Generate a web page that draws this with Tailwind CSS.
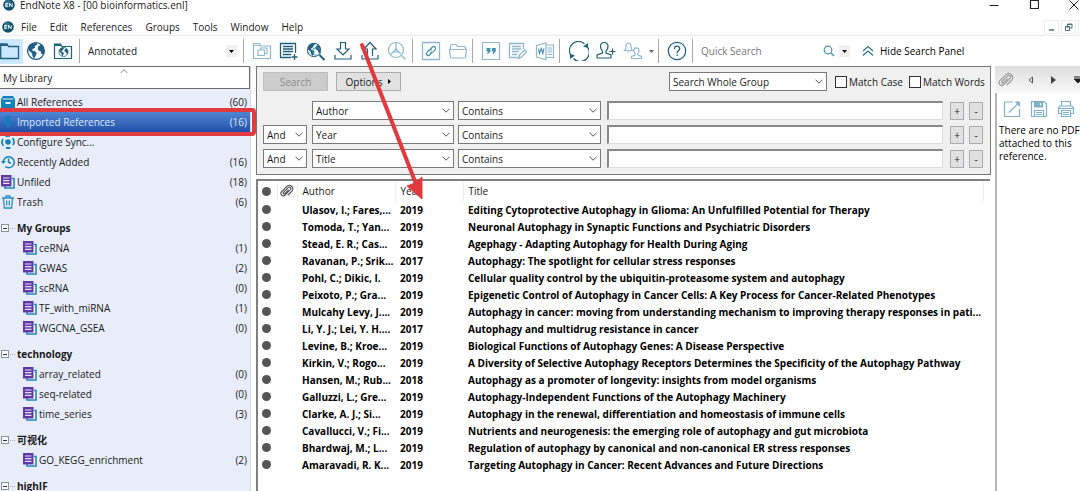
<!DOCTYPE html>
<html lang="en">
<head>
    <meta charset="UTF-8">
    <meta name="viewport" content="width=device-width, initial-scale=1.0">
    <title>EndNote X8 - [00 bioinformatics.enl]</title>
    <script src="https://cdn.jsdelivr.net/npm/@tailwindcss/browser@4"></script>
</head>
<body class="relative flex h-screen flex-col overflow-hidden bg-white font-['Open_Sans','Noto_Sans_CJK_SC',sans-serif] text-[10px] leading-[14px] text-[#1a1a1a]">

    <!-- Shared icons -->
    <svg class="hidden">
        <symbol id="logo" viewBox="0 0 12 12">
            <circle cx="6" cy="6" r="5.8" fill="#12506b"/>
            <circle cx="5" cy="4" r="3" fill="#3d86a3" opacity=".6"/>
            <path d="M2.6 4.4h2.6M2.6 6h2.2M2.6 7.7h2.6M2.8 4.4v3.3M6.6 7.8V4.3l2.6 3.4V4.2" fill="none" stroke="#fff" stroke-width=".9"/>
        </symbol>
        <symbol id="chevron" viewBox="0 0 8 5">
            <path d="M.5.7 4 4.2 7.5.7" fill="none" stroke="#555"/>
        </symbol>
        <symbol id="clip" viewBox="0 0 16 16">
            <path d="M4 9.5l5.6-5.6a1.7 1.7 0 012.4 2.4L5.8 12.6a2.7 2.7 0 01-3.9-3.9L8.4 2.2a4 4 0 015.5 5.6L8.8 13M4 9.5a1 1 0 001.5 1.4l4.3-4.3" fill="none" stroke="currentColor" stroke-width="1.2"/>
        </symbol>
        <symbol id="group" viewBox="0 0 14 14">
            <path d="M11 3.500h2v9.500H4v-2" fill="#fff" stroke="#1e86c0" stroke-width="1.600"/>
            <path d="M0 0h10.5v11.5H0z" fill="#5f3aa5"/>
            <path d="M2 3h6.5M2 5.7h6.5M2 8.4h6.5" stroke="#e6defa" stroke-width="1.2"/>
        </symbol>
        <symbol id="globe" viewBox="0 0 20 20">
            <circle cx="10" cy="10" r="8.4" fill="#f4fafd" stroke="#1f5f80" stroke-width="1.3"/>
            <path d="M3 5.5C5 2.5 8 1.8 10.5 2l.6 1.7-2.4 1.2.4 1.8-2.5 1.2-.3 1.9 2.8.4 1.7 2-1.2 2.5-1.3 2.8-1.8-2.2-.4-3L3.3 10 2 8zM12.5 5.2l2.8-1.7 2.4 3 .8 4.3-1.5 2.8-1.8-.8-.5-2.6-2.4-.7-.6-2.3z" fill="#1f5f80"/>
        </symbol>
    </svg>

    <!-- Title bar -->
    <header class="mb-2 flex h-[10px] shrink-0 items-center pl-[3px] leading-[10px]">
        <svg class="mr-[5px] size-3"><use href="#logo"/></svg>
        <h1>EndNote X8 - [00 bioinformatics.enl]</h1>
        <div class="ml-auto flex items-center gap-[30px] pr-px">
            <button aria-label="Minimize"><svg class="block h-[10px] w-[10px]" viewBox="0 0 10 10"><path d="M.5 5.5h9" stroke="#222"/></svg></button>
            <button aria-label="Maximize"><svg class="block h-[10px] w-[10px]" viewBox="0 0 10 10"><path d="M1.5.5h8v8h-8z" fill="none" stroke="#222" stroke-width="1.2"/></svg></button>
            <button aria-label="Close"><svg class="block h-[10px] w-[10px]" viewBox="0 0 10 10"><path d="M.5.5l9 9M9.5.5l-9 9" stroke="#222"/></svg></button>
        </div>
    </header>

    <!-- Menu bar -->
    <nav class="flex h-[18px] shrink-0 items-center border-b border-[#ebebeb] pl-0.5">
        <svg class="mr-[7px] size-3"><use href="#logo"/></svg>
        <div class="flex items-center gap-[13px]">
            <button>File</button>
            <button>Edit</button>
            <button>References</button>
            <button>Groups</button>
            <button>Tools</button>
            <button>Window</button>
            <button>Help</button>
        </div>
        <div class="ml-auto flex gap-0.5">
            <button aria-label="Minimize document" class="h-[14px] w-[15px] border border-[#ececec]"><svg class="block h-3 w-[13px]" viewBox="0 0 13 12"><path d="M4 9h5" stroke="#4d5f70" stroke-width="1.4"/></svg></button>
            <button aria-label="Restore document" class="h-[14px] w-[15px] border border-[#ececec]"><svg class="block h-3 w-[13px]" viewBox="0 0 13 12"><path d="M3.5 5.5h4v4h-4zM5.5 5V3h4.500v4H8M5.500 3.500h4.500M3.500 6h4" fill="none" stroke="#4d6f87"/></svg></button>
            <button aria-label="Close document" class="h-[14px] w-0.5 border-y border-l border-[#ececec]"></button>
        </div>
    </nav>

    <!-- Toolbar -->
    <div class="flex h-[30px] shrink-0 items-center text-[#1f5f80]">
        <button aria-label="Local library" class="flex h-[25px] w-[23px] items-center bg-[#cce8ff]">
            <svg class="h-5 w-5" viewBox="0 0 20 20"><path d="M.700 17.500V3h6.300l1.500 2.500h10v12z" fill="none" stroke="#1f5f80" stroke-width="1.300"/><path d="M.700 3h6.300l1 2H.700z" fill="#1f5f80"/></svg>
        </button>
        <button aria-label="Online search" class="ml-[3px]"><svg class="block size-5"><use href="#globe"/></svg></button>
        <button aria-label="Integrated library and online search" class="ml-[7px]">
            <svg class="block size-5" viewBox="0 0 20 20"><path d="M1.500 17.500V3h6l1.500 2.500h9.500v12z" fill="none" stroke="#1f5f80" stroke-width="1.200"/><path d="M1.500 3h6l1 2h-7z" fill="#1f5f80"/><svg x="5" y="5.500" width="11" height="11"><use href="#globe"/></svg></svg>
        </button>
        <span class="ml-1.5 h-6 w-px bg-[#a8a8a8]"></span>
        <div class="ml-2 grid w-[149px] items-center">
            <select aria-label="Output style" class="col-start-1 row-start-1 w-full appearance-none text-[#1a1a1a]"><option>Annotated</option></select>
            <span class="pointer-events-none col-start-1 row-start-1 flex h-3 w-[11px] items-center justify-center justify-self-end bg-[#f0f0f0]"><svg class="h-[3px] w-[5px]" viewBox="0 0 5 3"><path d="M0 0h5L2.500 3z" fill="#000"/></svg></span>
        </div>
        <span class="ml-1.5 h-6 w-px bg-[#a8a8a8]"></span>
        <div class="ml-2 flex items-center gap-[7px]">
            <button aria-label="Copy to local library"><svg class="block size-5" viewBox="0 0 20 20" fill="none" stroke="#8fb8cf" stroke-width="1.200"><path d="M1.500 17.500v-15h6L9 5h9.500v12.500zM1.500 4.500H9M6 9h6.500v5.500H6zM8.500 9V7h6.500v5.500h-2.500"/></svg></button>
            <button aria-label="New reference"><svg class="block size-5" viewBox="0 0 20 20" fill="none" stroke="#1f5f80" stroke-width="1.300"><path d="M12 16.500H1.500v-14H16.500V12M4 5.500h10M4 8h10M4 10.500h10M4 13.500h8M15.500 13v6M12.500 16h6"/></svg></button>
            <button aria-label="Online search tool"><svg class="block size-5" viewBox="0 0 20 20"><svg x="0" y="1" width="16" height="16"><use href="#globe"/></svg><path d="M13.500 14l5 5" stroke="#1f5f80" stroke-width="2"/><circle cx="10.500" cy="10.500" r="4" fill="none" stroke="#4d8fae"/></svg></button>
            <button aria-label="Import"><svg class="block size-5" viewBox="0 0 20 20" fill="none" stroke="#1f5f80" stroke-width="1.200"><path d="M7.500 1.500h5V8h3.500l-6 6-6-6h3.500zM2 14v4h16v-4"/></svg></button>
            <button aria-label="Export"><svg class="block size-5" viewBox="0 0 20 20" fill="none" stroke="#1f5f80" stroke-width="1.200"><path d="M7.500 15V8H4l6-6.500L16 8h-3.500v7M2 14v4h16v-4"/></svg></button>
            <button aria-label="Find full text"><svg class="block size-5" viewBox="0 0 20 20" fill="none" stroke="#8fb8cf" stroke-width="1.200"><circle cx="9" cy="9" r="7.500"/><path d="M14.500 14.500l4 4M9 1.500v5.500M9 8.500l-5.500 5M9 8.500l5 4.500M9 7l-2 4h4z"/></svg></button>
        </div>
        <span class="ml-[5px] h-6 w-px bg-[#a8a8a8]"></span>
        <div class="ml-2 flex items-center gap-[7px]">
            <button aria-label="Open link"><svg class="block size-5" viewBox="0 0 20 20" fill="none" stroke="#8fb8cf" stroke-width="1.300"><path d="M1.500 1.500h17v17h-17z"/><path d="M9 8.500l2.500-2.500a1.800 1.800 0 012.600 2.600L12 10.900a1.800 1.800 0 01-2.600 0M11 11.500L8.500 14a1.800 1.800 0 01-2.600-2.600L8 9.200a1.800 1.800 0 012.600 0" stroke="#4d8fae"/></svg></button>
            <button aria-label="Open file"><svg class="block size-5" viewBox="0 0 20 20" fill="none" stroke="#8fb8cf" stroke-width="1.200"><path d="M2.500 8V5q0-1.500 1.500-1.500h4L9.500 5.500H16q1.500 0 1.500 1.500v1M1.500 8.500h17l-1 7.500q-.2 1-1.200 1H3.700q-1 0-1.200-1z"/></svg></button>
        </div>
        <span class="ml-1 h-6 w-px bg-[#a8a8a8]"></span>
        <div class="ml-2 flex items-center gap-[7px]">
            <button aria-label="Insert citation"><svg class="block size-5" viewBox="0 0 20 20"><path d="M1.500 1.500h17v17h-17z" fill="none" stroke="#8fb8cf" stroke-width="1.200"/><path d="M5.500 7h4v3.500L7 13H6l1.200-2.500H5.500zM10.800 7h4v3.500L12.300 13h-1l1.200-2.500h-1.700z" fill="#4d8fae"/></svg></button>
            <button aria-label="Format bibliography"><svg class="block size-5" viewBox="0 0 20 20" fill="none" stroke="#8fb8cf" stroke-width="1.300"><path d="M10 16.500H1.500v-14h14V8M4 5.500h9M4 8h9M4 10.500h7M4 13.500h5M10.500 17.500l1-3.500 5-5 2 2-5 5z"/></svg></button>
            <button aria-label="Return to word processor"><svg class="block size-5" viewBox="0 0 20 20" fill="none" stroke="#8fb8cf" stroke-width="1.200"><path d="M1.500 4.500L11 2v16.500l-9.500-2.500zM11 4h7.500v12.500H11M12.500 7H17M12.500 9h4.500M12.500 11h4.500M12.500 13.500h4.500"/><path d="M3.500 7.500l1 5 1.700-5 1.700 5 1-5" stroke="#4d8fae"/></svg></button>
        </div>
        <span class="ml-1 h-6 w-px bg-[#a8a8a8]"></span>
        <div class="ml-[9px] flex items-center gap-[7px]">
            <button aria-label="Sync library"><svg class="block size-5" viewBox="0 0 20 20" fill="none" stroke="#1f5f80" stroke-width="1.200"><path d="M15.500 2.800A9 9 0 002 14.500M4.500 17.500A9 9 0 0018 5.500"/><path d="M14 5.500l5-3.500v5zM6 14.500L1 18v-5z" fill="#1f5f80" stroke="none"/></svg></button>
            <button aria-label="Share library"><svg class="block size-5" viewBox="0 0 20 20" fill="none" stroke="#1f5f80" stroke-width="1.200"><path d="M12.500 17H1v-3l5.500-2v-2Q4.500 8 4.500 5.500 4.500 1.500 8.200 1.500T12 5.500Q12 8 10 10v2l5 2v3h-3M16.500 7.500v6M13.500 10.500h6"/></svg></button>
            <button aria-label="Activity feed" class="flex items-center">
                <svg class="block size-5" viewBox="0 0 20 20" fill="none" stroke="#8fb8cf" stroke-width="1.200"><path d="M1.500 9.500q1.500-1.500 1.500-4Q3 2 5.500 2T8 5.500q0 2.500 1.500 4zM4.500 11h2M8.500 17.500v-2l3.500-1.500v-1.500Q10.800 11 10.800 9.500q0-2.700 2.600-2.700T16 9.500q0 1.500-1.200 3V14l3.700 1.500v2z"/></svg>
                <svg class="ml-1.5 h-[3px] w-[5px]" viewBox="0 0 5 3"><path d="M0 0h5L2.500 3z" fill="#666"/></svg>
            </button>
        </div>
        <span class="ml-1 h-6 w-px bg-[#a8a8a8]"></span>
        <button aria-label="Help" class="ml-2"><svg class="block size-5" viewBox="0 0 20 20"><circle cx="10" cy="10" r="8.700" fill="none" stroke="#1f5f80" stroke-width="1.200"/><path d="M7.500 8q0-2.800 2.600-2.800T12.700 7.800q0 1.200-1.300 2T10.100 12.300M10.100 13.500v1.500" fill="none" stroke="#1f5f80" stroke-width="1.300"/></svg></button>
        <span class="ml-[5px] h-6 w-px bg-[#a8a8a8]"></span>
        <input type="text" aria-label="Quick Search" placeholder="Quick Search" class="ml-2 w-[122px] placeholder:text-[#767676]">
        <button aria-label="Run quick search"><svg class="block size-3" viewBox="0 0 12 12"><circle cx="5" cy="5" r="3.800" fill="none" stroke="#4d8fae" stroke-width="1.200"/><path d="M8 8l3 3" stroke="#4d8fae" stroke-width="1.400"/></svg></button>
        <button aria-label="Quick search options" class="ml-1 flex h-3 w-[11px] items-center justify-center bg-[#f0f0f0]"><svg class="h-[3px] w-[5px]" viewBox="0 0 5 3"><path d="M0 0h5L2.500 3z" fill="#000"/></svg></button>
        <button class="ml-3 flex items-center gap-1.5 text-black"><svg class="size-3" viewBox="0 0 12 12" fill="none" stroke="#2f7397" stroke-width="1.200"><path d="M1 6l5-4.500L11 6M1 10.500L6 6l5 4.500"/></svg>Hide Search Panel</button>
    </div>

    <div class="flex min-h-0 flex-1">

        <!-- Library groups -->
        <aside class="w-[251px] shrink-0 overflow-hidden border-r border-[#d5d8e2] bg-[#e8edf9]">
            <div class="relative mb-[3px] flex h-[23px] items-center border border-l-0 border-[#6b6b6b] bg-white pl-[3px]">
                My Library
                <svg class="absolute top-0.5 left-[120px] h-1 w-2" viewBox="0 0 8 4"><path d="M.500 4L4 .700 7.500 4" fill="none" stroke="#888"/></svg>
            </div>
            <ul id="library"></ul>
        </aside>

        <!-- Search panel and reference list -->
        <main class="ml-[5px] flex min-w-0 flex-1 flex-col gap-1">
            <form class="flex flex-col gap-[5px] border border-[#777] bg-[#f0f0f0] px-1.5 pt-[5px] pb-1.5" onsubmit="return false">
                <div class="mb-[5px] flex items-center">
                    <button disabled class="h-[19px] w-[65px] border border-[#bfbfbf] bg-[#ccc] text-[#8c8c8c]">Search</button>
                    <button class="ml-2 flex h-[19px] w-[65px] items-center justify-center gap-1.5 border border-[#adadad] bg-[#e1e1e1]">Options<svg class="h-[5px] w-[3px]" viewBox="0 0 3 5"><path d="M0 0v5l3-2.500z" fill="#000"/></svg></button>
                    <div class="ml-auto grid w-[158px] items-center">
                        <select aria-label="Search scope" class="col-start-1 row-start-1 h-[19px] appearance-none border border-[#7a7a7a] bg-white pl-[3px]"><option>Search Whole Group</option></select>
                        <svg class="pointer-events-none col-start-1 row-start-1 mr-1 h-[5px] w-2 justify-self-end"><use href="#chevron"/></svg>
                    </div>
                    <label class="ml-2 flex w-[74px] items-center gap-0.5 whitespace-nowrap"><input type="checkbox" class="size-3 shrink-0 appearance-none border border-[#333] bg-white">Match Case</label>
                    <label class="flex w-[75px] items-center gap-0.5 whitespace-nowrap"><input type="checkbox" class="size-3 shrink-0 appearance-none border border-[#333] bg-white">Match Words</label>
                </div>
                <div id="criteria" class="flex flex-col gap-[5px]"></div>
            </form>

            <div class="mr-px min-h-0 flex-1 overflow-hidden border-t-2 border-l-2 border-[#808080] bg-white">
                <table class="w-full table-fixed">
                    <thead>
                        <tr class="h-5 text-left">
                            <th class="w-[19px] border-r border-[#eee]"><span class="ml-1 block size-[9px] rounded-full bg-[#555]"></span></th>
                            <th class="w-5 border-r border-[#eee] text-[#444]"><svg class="mx-auto block size-[14px]"><use href="#clip"/></svg></th>
                            <th class="w-[98px] border-r border-[#eee] pl-[5px] font-normal">Author</th>
                            <th class="w-[68px] border-r border-[#eee] pl-[5px] font-normal">Year</th>
                            <th class="border-r border-[#eee] pl-[5px] font-normal">Title</th>
                            <th class="w-[7px]"></th>
                        </tr>
                    </thead>
                    <tbody id="references" class="font-bold text-black"></tbody>
                </table>
            </div>
        </main>

        <!-- PDF panel -->
        <aside class="ml-1 flex w-[85px] shrink-0 flex-col overflow-hidden">
            <div class="flex h-[27px] shrink-0 items-center bg-gradient-to-b from-[#dedede] to-[#f8f8f8] pl-[3px]">
                <svg class="size-4 shrink-0 text-[#999]"><use href="#clip"/></svg>
                <button aria-label="Previous PDF" class="ml-3.5"><svg class="block h-2 w-[5px]" viewBox="0 0 5 8"><path d="M4.500 1v6L1 4z" fill="none" stroke="#555"/></svg></button>
                <button aria-label="Next PDF" class="ml-[18px]"><svg class="block h-2 w-[5px]" viewBox="0 0 5 8"><path d="M0 0v8l5-4z" fill="#444"/></svg></button>
                <button aria-label="PDF list" class="ml-[18px]"><svg class="block h-2 w-2" viewBox="0 0 8 8"><path d="M0 1h8M0 3h8L4 7z" fill="#222" stroke="#222"/></svg></button>
            </div>
            <div class="flex-1 border-l-2 border-[#b5b5b5] pt-[7px] pl-0.5">
                <div class="mb-1.5 flex gap-[9px] pl-1">
                    <button aria-label="Open PDF"><svg class="block size-[18px]" viewBox="0 0 18 18" fill="none" stroke="#7fb0c9" stroke-width="1.200"><path d="M10 2H1.500v14.500h15V9M6 12.500L16 2.500"/><path d="M11.500 1.500H17V7z" fill="#7fb0c9" stroke="none"/></svg></button>
                    <button aria-label="Save PDF"><svg class="block size-[18px]" viewBox="0 0 18 18" fill="none" stroke="#7fb0c9" stroke-width="1.200"><path d="M1.500 1.500h12.500l2.500 2.500v12.500h-15zM4.500 16.500v-6h9v6M6 12.500h6M6 14.500h6"/><path d="M4.500 1.500h8v5.500h-8z" fill="#7fb0c9"/><path d="M10.500 3v2.500" stroke="#fff"/></svg></button>
                    <button aria-label="Print PDF"><svg class="block size-[18px]" viewBox="0 0 18 18" fill="none" stroke="#7fb0c9" stroke-width="1.200"><path d="M4.500 6V1.500h9V6M4.500 13.500h-3V8l1.500-2h12l1.500 2v5.500h-3M4.500 10.500h9v6h-9zM6 12.500h6M6 14.500h6M2 8.500h14"/></svg></button>
                </div>
                <p class="leading-[13px] whitespace-nowrap text-black">There are no PDFs<br>attached to this<br>reference.</p>
            </div>
        </aside>
    </div>

    <!-- Red annotations -->
    <div class="pointer-events-none absolute top-[108px] -left-1 h-[28px] w-[260px] rounded-sm border-4 border-[#e23b3f]"></div>
    <svg class="pointer-events-none absolute top-10 left-[350px] h-[165px] w-20" viewBox="0 0 80 165">
        <path d="M12 5l54 139" stroke="#e0393e" stroke-width="4" stroke-linecap="round"/>
        <path d="M72 159L57 146l8-3 7-6z" fill="#e0393e" stroke="#e0393e"/>
    </svg>

    <script>
        const icons = {
            all: '<svg class="h-[14px] w-[14px] shrink-0" viewBox="0 0 14 14"><path d="M2 1h10l2 3v8q0 1.500-1.500 1.500h-11Q0 13.500 0 12V4z" fill="#1282b8"/><path d="M1.500 4h11" stroke="#e8edf9"/><path d="M4.500 8h5" stroke="#fff" stroke-width="1.800"/></svg>',
            imported: '<svg class="h-[14px] w-[14px] shrink-0" viewBox="0 0 14 14"><path d="M4.500 1h5v5H13l-6 7-6-7h3.500z" fill="#1a78bd"/></svg>',
            sync: '<svg class="h-[14px] w-[14px] shrink-0" viewBox="0 0 14 14" fill="none" stroke="#1282b8" stroke-width="1.700"><circle cx="7" cy="7" r="2.800" fill="#1282b8" stroke="none"/><path d="M2.500 11A6 6 0 012 4M11.500 3A6 6 0 0112 10M4.500 1.500A6 6 0 019 1.200M5 12.600a6 6 0 004.500 0"/></svg>',
            recent: '<svg class="h-[14px] w-[14px] shrink-0" viewBox="0 0 14 14" fill="none" stroke="#1282b8" stroke-width="1.500"><path d="M2.200 7a5.500 5.500 0 112 4.500M7.500 3.500V7l2.500 1.500"/><path d="M0 6h4.800L2.300 9z" fill="#1282b8" stroke="none"/></svg>',
            group: '<svg class="h-[14px] w-[14px] shrink-0"><use href="#group"/></svg>',
            trash: '<svg class="h-[14px] w-[14px] shrink-0" viewBox="0 0 14 14" fill="none" stroke="#2d8fc4" stroke-width="1.300"><path d="M1 3h12M5 3V1h4v2M2.500 3l.800 10h7.400l.800-10M5.700 5.500v5M8.300 5.500v5"/></svg>',
        };

        const library = [
            { label: 'All References', count: 60, icon: 'all' },
            { label: 'Imported References', count: 16, icon: 'imported', selected: true },
            { label: 'Configure Sync...', icon: 'sync' },
            { label: 'Recently Added', count: 16, icon: 'recent' },
            { label: 'Unfiled', count: 18, icon: 'group' },
            { label: 'Trash', count: 6, icon: 'trash' },
            { heading: 'My Groups' },
            { label: 'ceRNA', count: 1, nested: true },
            { label: 'GWAS', count: 2, nested: true },
            { label: 'scRNA', count: 0, nested: true },
            { label: 'TF_with_miRNA', count: 1, nested: true },
            { label: 'WGCNA_GSEA', count: 0, nested: true },
            { heading: 'technology' },
            { label: 'array_related', count: 0, nested: true },
            { label: 'seq-related', count: 0, nested: true },
            { label: 'time_series', count: 3, nested: true },
            { heading: '可视化' },
            { label: 'GO_KEGG_enrichment', count: 2, nested: true },
            { heading: 'highIF' },
        ];

        document.getElementById('library').innerHTML = library.map(item => {
            if (item.heading) {
                return `
                <li class="mt-1.5 flex h-5 items-center font-bold">
                    <button aria-label="Collapse" class="ml-px flex size-2 items-center justify-center border border-[#8a93a0] bg-white"><span class="h-px w-1 bg-[#333]"></span></button>
                    <span class="mr-0.5 ml-px w-[5px] border-t border-dotted border-[#aab]"></span>${item.heading}
                </li>`;
            }
            const row = item.selected ? 'bg-gradient-to-b from-[#4f86d2] to-[#2450a8] text-[#dfe9fb]' : '';
            const indent = item.nested ? 'pl-[23px]' : 'pl-px';
            const count = item.count === undefined ? '' : `(${item.count})`;
            return `
                <li class="flex h-5 items-center gap-0.5 ${indent} pr-[3px] ${row}">
                    ${icons[item.icon || 'group']}<span>${item.label}</span><span class="ml-auto">${count}</span>
                </li>`;
        }).join('');

        // Search criteria rows
        const dropdown = (name, value, width) => `
            <div class="grid ${width} shrink-0 items-center">
                <select aria-label="${name}" class="col-start-1 row-start-1 h-[19px] w-full appearance-none border border-[#7a7a7a] bg-white pl-[3px]"><option>${value}</option></select>
                <svg class="pointer-events-none col-start-1 row-start-1 mr-1 h-[5px] w-2 justify-self-end"><use href="#chevron"/></svg>
            </div>`;

        document.getElementById('criteria').innerHTML = ['Author', 'Year', 'Title'].map((field, i) => `
            <div class="flex items-center">
                ${i ? dropdown('Operator', 'And', 'w-[44px]') : '<span class="w-[44px] shrink-0"></span>'}
                <span class="w-[5px] shrink-0"></span>
                ${dropdown('Field', field, 'w-[142px]')}
                <span class="w-[4px] shrink-0"></span>
                ${dropdown('Comparison', 'Contains', 'w-[143px]')}
                <input type="text" aria-label="Search term" class="ml-1.5 h-[19px] min-w-0 flex-1 border-t-2 border-l-2 border-r border-b border-t-[#8a8a8a] border-l-[#8a8a8a] border-r-[#ddd] border-b-[#ddd] bg-white">
                <button aria-label="Add row" class="ml-[7px] h-[18px] w-[14px] border border-[#adadad] bg-[#e1e1e1]">+</button>
                <button aria-label="Remove row" class="mr-px ml-[5px] h-[18px] w-[14px] border border-[#adadad] bg-[#e1e1e1]">-</button>
            </div>`).join('');

        const references = [
            ['Ulasov, I.; Fares,...', 2019, 'Editing Cytoprotective Autophagy in Glioma: An Unfulfilled Potential for Therapy'],
            ['Tomoda, T.; Yan...', 2019, 'Neuronal Autophagy in Synaptic Functions and Psychiatric Disorders'],
            ['Stead, E. R.; Cas...', 2019, 'Agephagy - Adapting Autophagy for Health During Aging'],
            ['Ravanan, P.; Srik...', 2017, 'Autophagy: The spotlight for cellular stress responses'],
            ['Pohl, C.; Dikic, I.', 2019, 'Cellular quality control by the ubiquitin-proteasome system and autophagy'],
            ['Peixoto, P.; Gra...', 2019, 'Epigenetic Control of Autophagy in Cancer Cells: A Key Process for Cancer-Related Phenotypes'],
            ['Mulcahy Levy, J....', 2019, 'Autophagy in cancer: moving from understanding mechanism to improving therapy responses in pati...'],
            ['Li, Y. J.; Lei, Y. H....', 2017, 'Autophagy and multidrug resistance in cancer'],
            ['Levine, B.; Kroe...', 2019, 'Biological Functions of Autophagy Genes: A Disease Perspective'],
            ['Kirkin, V.; Rogo...', 2019, 'A Diversity of Selective Autophagy Receptors Determines the Specificity of the Autophagy Pathway'],
            ['Hansen, M.; Rub...', 2018, 'Autophagy as a promoter of longevity: insights from model organisms'],
            ['Galluzzi, L.; Gre...', 2019, 'Autophagy-Independent Functions of the Autophagy Machinery'],
            ['Clarke, A. J.; Si...', 2019, 'Autophagy in the renewal, differentiation and homeostasis of immune cells'],
            ['Cavallucci, V.; Fi...', 2019, 'Nutrients and neurogenesis: the emerging role of autophagy and gut microbiota'],
            ['Bhardwaj, M.; L...', 2019, 'Regulation of autophagy by canonical and non-canonical ER stress responses'],
            ['Amaravadi, R. K...', 2019, 'Targeting Autophagy in Cancer: Recent Advances and Future Directions'],
        ];

        document.getElementById('references').innerHTML = references.map(([author, year, title]) => `
            <tr class="h-[17px] whitespace-nowrap">
                <td><span class="ml-1 block size-[9px] rounded-full bg-[#555]"></span></td>
                <td></td>
                <td class="pl-[5px]">${author}</td>
                <td class="pl-[5px]">${year}</td>
                <td class="pl-[5px]">${title}</td>
                <td></td>
            </tr>`).join('');
    </script>
</body>
</html>
